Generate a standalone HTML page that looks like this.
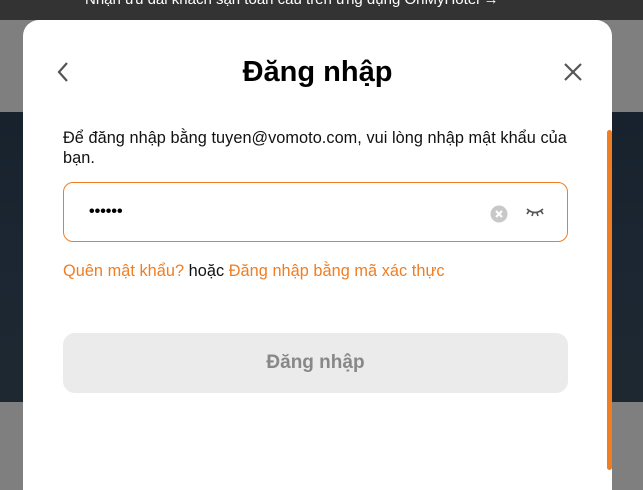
<!DOCTYPE html>
<html><head><meta charset="utf-8"><style>
*{margin:0;padding:0;box-sizing:border-box}
body{width:643px;height:470px;overflow:hidden;position:relative;font-family:"Liberation Sans",Arial,sans-serif;background:#7f7f7f}
.top{position:absolute;left:0;top:0;width:643px;height:20px;background:#333}
.top span{position:absolute;left:85px;top:-9px;color:#fff;font-size:15px;white-space:nowrap}
.band{position:absolute;left:0;top:112px;width:643px;height:290px;background:linear-gradient(#17222d,#1c2733 60%,#1e2830)}
.modal{position:absolute;left:23px;top:20px;width:589px;height:470px;background:#fff;border-radius:16px 16px 0 0}
.sb{position:absolute;left:607px;top:130px;width:5px;height:340px;background:#f07d22;border-radius:3px}
h1{position:absolute;left:0;width:589px;top:36px;text-align:center;font-size:29px;font-weight:bold;color:#000}
.p{position:absolute;left:40px;top:108px;width:525px;font-size:16.3px;line-height:20px;color:#111;letter-spacing:0.05px}
.inp{position:absolute;left:40px;top:162px;width:505px;height:60px;border:1px solid #f07d22;border-radius:10px}
.dots{position:absolute;left:25px;top:20px;font-size:16px;color:#000;font-weight:bold}
.links{position:absolute;left:40px;top:242px;font-size:16.3px;color:#f07d22;letter-spacing:0.05px}
.links b{font-weight:normal;color:#111}
.btn{position:absolute;left:40px;top:313px;width:505px;height:60px;background:#ebebeb;border-radius:12px;text-align:center;line-height:60px;font-size:19px;font-weight:bold;color:#888}
</style></head><body>
<div class="top"><span>Nhận ưu đãi khách sạn toàn cầu trên ứng dụng OhMyHotel →</span></div>
<div class="band"></div>
<div class="modal">
<svg style="position:absolute;left:32px;top:40px" width="16" height="24" viewBox="0 0 16 24"><path d="M12 3 L4 12 L12 21" fill="none" stroke="#555" stroke-width="2.2"/></svg>
<h1>Đăng nhập</h1>
<svg style="position:absolute;left:540px;top:42px" width="20" height="20" viewBox="0 0 20 20"><path d="M2 2 L18 18 M18 2 L2 18" stroke="#555" stroke-width="2.2"/></svg>
<div class="p">Để đăng nhập bằng tuyen@vomoto.com, vui lòng nhập mật khẩu của bạn.</div>
<div class="inp"><div class="dots">••••••</div>
<svg style="position:absolute;left:426px;top:22px" width="18" height="18" viewBox="0 0 18 18"><circle cx="9" cy="9" r="8.5" fill="#c8c8c8"/><path d="M6 6 L12 12 M12 6 L6 12" stroke="#fff" stroke-width="2"/></svg>
<svg style="position:absolute;left:461px;top:23px" width="20" height="14" viewBox="0 0 20 14"><path d="M2 3 Q10 10 18 3 M4 5 L2 8 M8 7 L7 10 M12 7 L13 10 M16 5 L18 8" fill="none" stroke="#555" stroke-width="1.6"/></svg>
</div>
<div class="links">Quên mật khẩu? <b>hoặc</b> Đăng nhập bằng mã xác thực</div>
<div class="btn">Đăng nhập</div>
</div>
<div class="sb"></div>
</body></html>
